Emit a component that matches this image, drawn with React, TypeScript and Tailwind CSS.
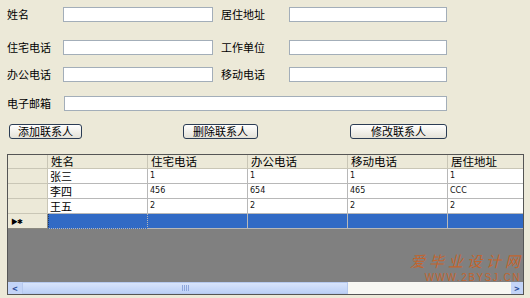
import React from "react"

const font = { fontFamily: '"Noto Sans CJK SC", "DejaVu Sans", sans-serif' }

const rows = [
  { name: "张三", home: "1", office: "1", mobile: "1", addr: "1" },
  { name: "李四", home: "456", office: "654", mobile: "465", addr: "CCC" },
  { name: "王五", home: "2", office: "2", mobile: "2", addr: "2" },
]

const headers = ["姓名", "住宅电话", "办公电话", "移动电话", "居住地址"]

function Field({ label, labelW, inputW }: { label: string; labelW: string; inputW: string }) {
  return (
    <div className="flex items-center h-[15px]">
      <span className={`${labelW} text-[11px] leading-none text-black`}>{label}</span>
      <div className={`${inputW} h-[15px] bg-white border border-[#a3aeb9]`} />
    </div>
  )
}

function XpButton({ label, w }: { label: string; w: string }) {
  return (
    <div
      className={`${w} h-[15px] flex items-center justify-center rounded-[3px] border border-[#2b3c54] bg-gradient-to-b from-white to-[#e4e2d8] text-[11px] leading-none text-black`}
    >
      {label}
    </div>
  )
}

export default function App() {
  return (
    <div className="w-[530px] h-[298px] bg-[#ece9d8] overflow-hidden relative" style={font}>
      {/* form */}
      <div className="pl-[7px] pt-[7px] flex flex-col">
        <div className="flex">
          <Field label="姓名" labelW="w-[56px]" inputW="w-[150px]" />
          <div className="w-[8px]" />
          <Field label="居住地址" labelW="w-[68px]" inputW="w-[158px]" />
        </div>
        <div className="flex mt-[18px]">
          <Field label="住宅电话" labelW="w-[56px]" inputW="w-[150px]" />
          <div className="w-[8px]" />
          <Field label="工作单位" labelW="w-[68px]" inputW="w-[158px]" />
        </div>
        <div className="flex mt-[12px]">
          <Field label="办公电话" labelW="w-[56px]" inputW="w-[150px]" />
          <div className="w-[8px]" />
          <Field label="移动电话" labelW="w-[68px]" inputW="w-[158px]" />
        </div>
        <div className="flex mt-[14px]">
          <Field label="电子邮箱" labelW="w-[57px]" inputW="w-[383px]" />
        </div>
        <div className="flex mt-[13px] pl-[2px]">
          <XpButton label="添加联系人" w="w-[73px]" />
          <div className="w-[101px]" />
          <XpButton label="删除联系人" w="w-[75px]" />
          <div className="w-[92px]" />
          <XpButton label="修改联系人" w="w-[97px]" />
        </div>
      </div>

      {/* data grid */}
      <div className="ml-[7px] mt-[15px] w-[517px] h-[141px] border border-[#555] flex flex-col bg-[#808080] overflow-hidden">
        <div className="flex h-[14px] bg-[#ece9d8] border-b border-[#c9c6b6] shrink-0">
          <div className="w-[40px] shrink-0 border-r border-[#c9c6b6]" />
          {headers.map((h) => (
            <div
              key={h}
              className="w-[100px] shrink-0 border-r border-[#c9c6b6] pl-[3px] text-[11.5px] leading-[13px] text-black"
            >
              {h}
            </div>
          ))}
        </div>
        {rows.map((r) => (
          <div key={r.name} className="flex h-[15px] shrink-0">
            <div className="w-[40px] shrink-0 bg-[#ece9d8] border-r border-b border-[#c9c6b6]" />
            <div className="w-[100px] shrink-0 bg-white border-r border-b border-[#b8b8b8] pl-[2px] text-[11px] leading-[14px]">
              {r.name}
            </div>
            {[r.home, r.office, r.mobile, r.addr].map((v, i) => (
              <div
                key={i}
                className="w-[100px] shrink-0 bg-white border-r border-b border-[#b8b8b8] pl-[2px] text-[8px] leading-[14px] text-[#111]"
                style={{ fontFamily: '"DejaVu Sans", sans-serif' }}
              >
                {v}
              </div>
            ))}
          </div>
        ))}
        <div className="flex h-[15px] shrink-0">
          <div className="w-[40px] shrink-0 bg-[#ece9d8] border-r border-b border-[#8c8a80] pl-[3px] text-[7px] leading-[14px] text-black tracking-[-1px]">
            ▶✱
          </div>
          {[0, 1, 2, 3, 4].map((i) => (
            <div
              key={i}
              className={`w-[100px] shrink-0 bg-[#316ac5] border-r border-b border-[#b8b8b8] ${i === 0 ? "border-l border-dotted border-l-[#1a3a70]" : ""}`}
            />
          ))}
        </div>
        <div className="flex-1" />
        {/* horizontal scrollbar */}
        <div className="h-[12px] flex shrink-0 bg-[#f7f7f2]">
          <div className="w-[14px] flex items-center justify-center bg-[#c3d4f7] text-[#2c4d9a] text-[9px] font-bold leading-none">
            &lt;
          </div>
          <div className="w-[326px] border border-[#b6c9ee] bg-gradient-to-b from-[#d8e4fb] to-[#bcd0f6] flex items-center justify-center">
            <div className="flex gap-[1px]">
              <div className="w-[1px] h-[6px] bg-[#8ea7dc]" />
              <div className="w-[1px] h-[6px] bg-[#8ea7dc]" />
              <div className="w-[1px] h-[6px] bg-[#8ea7dc]" />
              <div className="w-[1px] h-[6px] bg-[#8ea7dc]" />
            </div>
          </div>
          <div className="flex-1" />
          <div className="w-[12px] flex items-center justify-center bg-[#c3d4f7] text-[#2c4d9a] text-[9px] font-bold leading-none">
            &gt;
          </div>
        </div>
      </div>

      {/* watermark */}
      <div className="absolute left-[404px] top-[253px] w-[116px] flex flex-col items-end pointer-events-none">
        <div
          className="h-[15px] text-[15px] leading-[15px] italic text-[#c0652f] tracking-[4px] -mr-[4px]"
          style={{ fontFamily: '"Noto Sans CJK SC", serif' }}
        >
          爱毕业设计网
        </div>
        <div
          className="h-[10px] text-[10px] leading-[10px] text-[#c0652f] tracking-[1.5px] mt-[5px] -mr-[1px]"
          style={{ fontFamily: '"Liberation Sans", sans-serif' }}
        >
          WWW.2BYSJ.CN
        </div>
      </div>
    </div>
  )
}
